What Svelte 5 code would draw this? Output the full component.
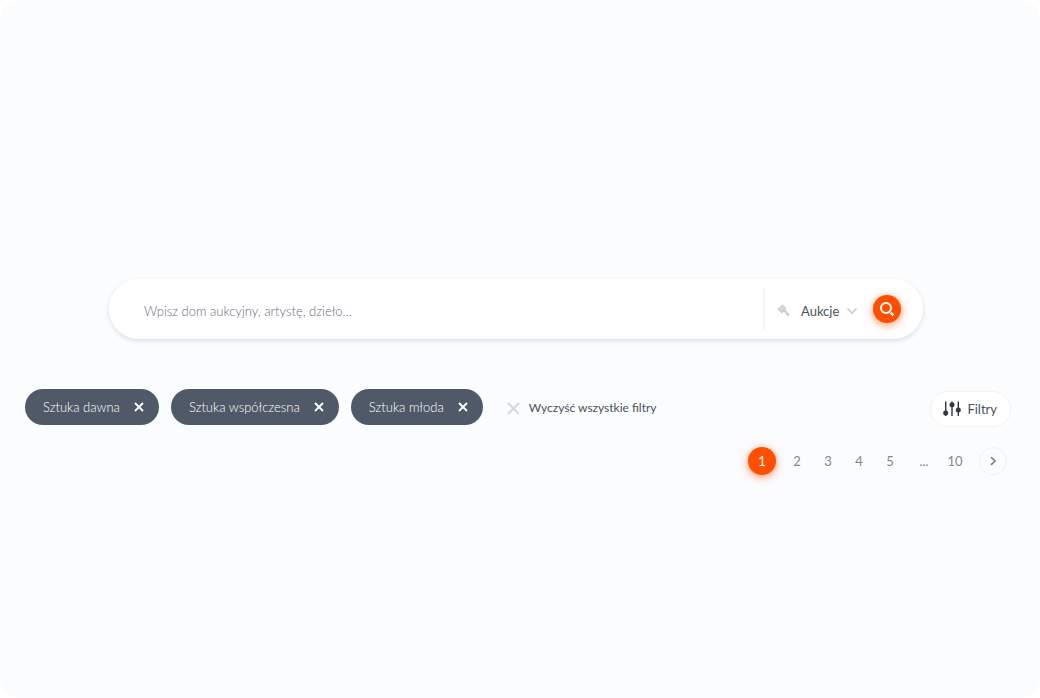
<script lang="ts">
  let query = $state('');
  let category = $state('Aukcje');
  let tags = $state(['Sztuka dawna', 'Sztuka współczesna', 'Sztuka młoda']);
  let page = $state(1);

  const pages = [1, 2, 3, 4, 5];

  function removeTag(tag: string) {
    tags = tags.filter((t) => t !== tag);
  }
</script>

<main>
  <form class="search" role="search" onsubmit={(e) => e.preventDefault()}>
    <input
      type="text"
      aria-label="Szukaj"
      placeholder="Wpisz dom aukcyjny, artystę, dzieło…"
      bind:value={query}
    />
    <div class="category">
      <svg width="13" height="13" viewBox="0 0 13 13" aria-hidden="true">
        <path d="M5.4 0.2 9.4 4 8.4 5.4 12.8 10.4 11 12.4 6.8 7.8 4.6 9.4 0.2 5.2Z" fill="#cfd0d2" />
        <path d="M2.2 3.2 5.4 6.4M3.8 1.7 7 4.9" stroke="#fff" stroke-width="0.4" fill="none" />
      </svg>
      <select aria-label="Kategoria" bind:value={category}>
        <option>Aukcje</option>
        <option>Artyści</option>
        <option>Domy</option>
      </select>
      <svg class="chevron" width="12" height="8" viewBox="0 0 12 8" aria-hidden="true">
        <path d="M1.5 1.5 6 6 10.5 1.5" fill="none" stroke="#c9cacc" stroke-width="1.6" />
      </svg>
    </div>
    <button class="submit" type="submit" aria-label="Szukaj">
      <svg width="16" height="16" viewBox="0 0 16 16" aria-hidden="true">
        <circle cx="7" cy="7" r="5" fill="none" stroke="#fff" stroke-width="2" />
        <path d="M11.6 11.8 14.4 14.4" stroke="#fff" stroke-width="2.6" />
      </svg>
    </button>
  </form>

  <div class="filters">
    {#each tags as tag (tag)}
      <div class="tag">
        <span>{tag}</span>
        <button type="button" aria-label="Usuń {tag}" onclick={() => removeTag(tag)}>
          <svg width="10" height="10" viewBox="0 0 10 10" aria-hidden="true">
            <path d="M1 1 9 9M9 1 1 9" stroke="#fff" stroke-width="1.8" />
          </svg>
        </button>
      </div>
    {/each}
    <button class="clear" type="button" onclick={() => (tags = [])}>
      <svg width="13" height="13" viewBox="0 0 13 13" aria-hidden="true">
        <path d="M1 1 12 12M12 1 1 12" stroke="#d6d7d9" stroke-width="2" />
      </svg>
      Wyczyść wszystkie filtry
    </button>
    <button class="open-filters" type="button">
      <svg width="18" height="16" viewBox="0 0 18 16" aria-hidden="true">
        <path d="M2.7 0.5V15M9 0.5V15M15.3 0.5V15" stroke="#2f3645" stroke-width="1.4" />
        <circle cx="2.7" cy="12" r="2.5" fill="#2f3645" />
        <circle cx="9" cy="3.8" r="2.5" fill="#2f3645" />
        <circle cx="15.3" cy="9" r="2.5" fill="#2f3645" />
      </svg>
      Filtry
    </button>
  </div>

  <nav class="pagination" aria-label="Strony">
    {#each pages as n}
      <button type="button" class:active={page === n} onclick={() => (page = n)}>{n}</button>
    {/each}
    <span class="dots">...</span>
    <button type="button" class:active={page === 10} onclick={() => (page = 10)}>10</button>
    <button type="button" class="next" aria-label="Następna" onclick={() => (page = Math.min(page + 1, 10))}>
      <svg width="8" height="10" viewBox="0 0 8 10" aria-hidden="true">
        <path d="M2 1.2 6 5 2 8.8" fill="none" stroke="#7f828e" stroke-width="1.7" />
      </svg>
    </button>
  </nav>
</main>

<style>
  :global(body) {
    background: #fff;
  }

  main {
    box-sizing: border-box;
    min-height: 100vh;
    padding: 279px 29px 40px 25px;
    border-radius: 20px;
    background: #fbfcfe;
    color: #303748;
    font-family: Lato, 'Liberation Sans', sans-serif;
    font-size: 13px;
    font-weight: 300;
    line-height: 20px;
  }

  button,
  input,
  select {
    padding: 0;
    border: 0;
    background: none;
    color: inherit;
    font: inherit;
  }

  button {
    cursor: pointer;
  }

  svg {
    display: block;
    flex: none;
  }

  .search {
    display: flex;
    align-items: center;
    box-sizing: border-box;
    height: 60px;
    margin: 0 88px 50px 84px;
    padding: 0 22px 0 35px;
    border-radius: 30px;
    background: #fff;
    box-shadow: 0 2px 5px rgba(40, 50, 70, 0.14);
  }

  .search input {
    flex: 1;
    min-width: 0;
    height: 40px;
    padding-top: 3px;
    outline: none;
  }

  .search input::placeholder {
    color: #696e80;
    opacity: 1;
  }

  .category {
    position: relative;
    display: flex;
    align-items: center;
    gap: 11px;
    box-sizing: border-box;
    height: 42px;
    padding: 3px 0 0 12px;
    border-left: 2px solid #f5f5f6;
  }

  select {
    width: 57px;
    appearance: none;
    outline: none;
    color: #4a5160;
    font-weight: 400;
  }

  .chevron {
    position: absolute;
    right: 0;
    top: 19px;
    pointer-events: none;
  }

  .submit {
    display: grid;
    place-items: center;
    width: 28px;
    height: 28px;
    margin-left: 15px;
    border-radius: 50%;
    background: #ff4f00;
    box-shadow: 0 2px 8px rgba(255, 79, 0, 0.6);
  }

  .filters {
    display: flex;
    align-items: flex-start;
    gap: 12px;
    margin-bottom: 20px;
  }

  .tag {
    display: flex;
    align-items: center;
    gap: 14px;
    height: 36px;
    padding: 0 15px 0 18px;
    border-radius: 18px;
    background: #505968;
    color: #fff;
  }

  .clear {
    display: flex;
    align-items: center;
    gap: 9px;
    height: 38px;
    margin-left: 12px;
    color: #4a5160;
    font-size: 12px;
    font-weight: 400;
  }

  .open-filters {
    display: flex;
    align-items: center;
    gap: 6px;
    box-sizing: border-box;
    height: 36px;
    margin: 2px 0 0 auto;
    padding: 0 13px 0 12px;
    border: 1px solid #f1f2f4;
    border-radius: 18px;
    background: #fff;
    color: #4a5160;
    font-weight: 400;
  }

  .pagination {
    display: flex;
    align-items: center;
    justify-content: flex-end;
    gap: 3px;
    padding-right: 4px;
    color: #83868f;
    font-weight: 400;
  }

  .pagination button {
    width: 28px;
    height: 28px;
    border-radius: 50%;
  }

  .pagination .active {
    margin-right: 4px;
    background: #ff4f00;
    box-shadow: 0 2px 8px rgba(255, 79, 0, 0.6);
    color: #fff;
  }

  .dots {
    width: 28px;
    margin-left: 3px;
    text-align: center;
  }

  .pagination .next {
    display: grid;
    place-items: center;
    box-sizing: border-box;
    margin-left: 7px;
    border: 1px solid #f0f1f3;
  }
</style>
